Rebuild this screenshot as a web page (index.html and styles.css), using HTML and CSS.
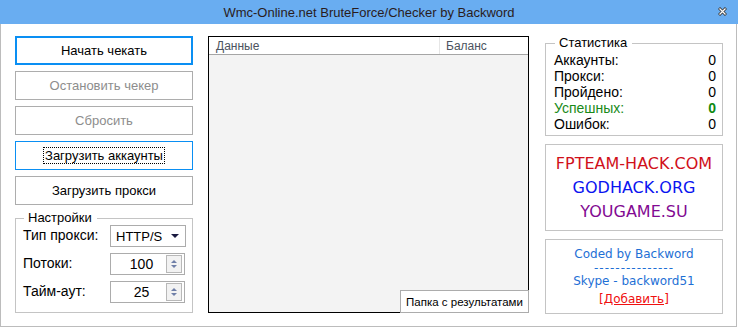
FILE: index.html
```html
<!DOCTYPE html>
<html lang="ru">
<head>
  <meta charset="UTF-8"/>
  <title>Wmc-Online.net BruteForce/Checker by Backword</title>
  <link rel="stylesheet" href="styles.css">
</head>
<body>

  <div class="window">
    <!-- TITLE BAR -->
    <div class="titlebar">
      <span class="title">Wmc-Online.net BruteForce/Checker by Backword</span>
      <span class="close">
        <svg width="9" height="9" viewBox="0 0 9 9">
          <path d="M1 1 L8 8 M8 1 L1 8" stroke="#3c3c3c" stroke-width="3"/>
          <path d="M1.5 1.5 L7.5 7.5 M7.5 1.5 L1.5 7.5" stroke="#fff" stroke-width="1.2"/>
        </svg>
      </span>
    </div>

    <div class="client">
      <!-- LEFT -->
      <div class="left">
        <button class="btn btn-default">Начать чекать</button>
        <button class="btn" disabled>Остановить чекер</button>
        <button class="btn" disabled>Сбросить</button>
        <button class="btn btn-focus"><span class="focus-ring">Загрузить аккаунты</span></button>
        <button class="btn">Загрузить прокси</button>

        <fieldset class="group settings">
          <legend>Настройки</legend>
          <div class="set-row">
            <span class="set-label">Тип прокси:</span>
            <div class="combo">
              <span>HTTP/S</span>
              <svg width="8" height="4" viewBox="0 0 8 4"><path d="M0 0 H8 L4 4 Z" fill="#1a1a40"/></svg>
            </div>
          </div>
          <div class="set-row">
            <span class="set-label">Потоки:</span>
            <div class="spin">
              <span class="spin-val">100</span>
              <span class="spin-btns">
                <span class="arrow up"></span>
                <span class="arrow down"></span>
              </span>
            </div>
          </div>
          <div class="set-row">
            <span class="set-label">Тайм-аут:</span>
            <div class="spin">
              <span class="spin-val">25</span>
              <span class="spin-btns">
                <span class="arrow up"></span>
                <span class="arrow down"></span>
              </span>
            </div>
          </div>
        </fieldset>
      </div>

      <!-- LIST -->
      <div class="list">
        <div class="list-head">
          <div class="col col-data">Данные</div>
          <div class="col col-bal">Баланс</div>
        </div>
        <div class="list-body"></div>
        <button class="folder-btn">Папка с результатами</button>
      </div>

      <!-- RIGHT -->
      <div class="right">
        <fieldset class="group stats">
          <legend>Статистика</legend>
          <div class="stat"><span>Аккаунты:</span><span>0</span></div>
          <div class="stat"><span>Прокси:</span><span>0</span></div>
          <div class="stat"><span>Пройдено:</span><span>0</span></div>
          <div class="stat good"><span>Успешных:</span><b>0</b></div>
          <div class="stat"><span>Ошибок:</span><span>0</span></div>
        </fieldset>

        <div class="box links">
          <div class="link red">FPTEAM-HACK.COM</div>
          <div class="link blue">GODHACK.ORG</div>
          <div class="link purple">YOUGAME.SU</div>
        </div>

        <div class="box credits">
          <div>Coded by Backword</div>
          <div class="dashes">---------------</div>
          <div>Skype - backword51</div>
          <a class="add" href="#">[Добавить]</a>
        </div>
      </div>
    </div>
  </div>

</body>
</html>
```

FILE: styles.css
```css
/* RESET */
* {
  margin: 0;
  padding: 0;
  box-sizing: border-box;
}

html, body {
  width: 738px;
  height: 327px;
  background: #fff;
  font-family: 'Liberation Sans', Arial, sans-serif;
  font-size: 13px;
  color: #000;
  overflow: hidden;
}

/* WINDOW */
.window {
  width: 738px;
  height: 327px;
  display: flex;
  flex-direction: column;
}

.titlebar {
  height: 24px;
  background: #69adf1;
  display: flex;
  align-items: center;
  justify-content: center;
  position: relative;
}

.title {
  font-size: 13px;
  color: #2a1c1c;
  padding-top: 1px;
}

.close {
  position: absolute;
  right: 11px;
  top: 7px;
  width: 9px;
  height: 9px;
  display: flex;
}

.client {
  width: 737px;
  flex: 1;
  border: 1px solid #bcbcbc;
  border-top: none;
  display: flex;
  align-items: flex-start;
  padding: 12px 0 0 14px;
}

/* LEFT */
.left {
  width: 178px;
  display: flex;
  flex-direction: column;
  gap: 6px;
}

.btn {
  height: 29px;
  background: #fff;
  border: 1px solid #adadad;
  font-family: inherit;
  font-size: 13px;
  color: #000;
}

.btn:disabled {
  color: #8d8d8d;
}

.btn-default {
  border: 1px solid #0a8ff3;
  box-shadow: inset 0 0 0 1px #0a8ff3;
}

.btn-focus {
  border-color: #0a8ff3;
}

.focus-ring {
  outline: 1px dotted #000;
  padding: 0 1px;
}

.group {
  border: 1px solid #c4c4c4;
  padding: 0 6px 0 7px;
}

.group legend {
  font-size: 13px;
  line-height: 14px;
  padding: 0 5px 0 4px;
  margin-left: 1px;
}

.settings {
  height: 102px;
  padding-top: 0;
  display: flex;
  flex-direction: column;
  gap: 6px;
}

.set-row {
  display: flex;
  align-items: center;
  justify-content: space-between;
  font-size: 14px;
}

.set-label {
  margin-top: -3px;
}

.combo {
  width: 76px;
  height: 22px;
  border: 1px solid #acacac;
  display: flex;
  align-items: center;
  justify-content: space-between;
  padding: 0 6px 0 5px;
  font-size: 13px;
}

.spin {
  width: 75px;
  height: 22px;
  border: 1px solid #acacac;
  display: flex;
  align-items: center;
  margin-right: 1px;
  font-size: 14px;
}

.spin-val {
  flex: 1;
  text-align: center;
  padding-left: 6px;
}

.spin-btns {
  width: 16px;
  height: 18px;
  margin-right: 2px;
  border: 1px solid #b8b8b8;
  background: #f2f2f2;
  display: flex;
  flex-direction: column;
  align-items: center;
  justify-content: center;
  gap: 2px;
}

.arrow {
  width: 0;
  height: 0;
  border-left: 3px solid transparent;
  border-right: 3px solid transparent;
}

.arrow.up {
  border-bottom: 3px solid #6f7fa8;
}

.arrow.down {
  border-top: 3px solid #6f7fa8;
}

/* LIST */
.list {
  width: 321px;
  height: 277px;
  margin-left: 15px;
  border: 1px solid #000;
  background: #f3f3f3;
  position: relative;
  display: flex;
  flex-direction: column;
}

.list-head {
  height: 18px;
  background: #fff;
  border-bottom: 1px solid #a5a5a5;
  display: flex;
  font-size: 12px;
  color: #4c5360;
}

.col {
  padding: 2px 0 0 7px;
}

.col-data {
  width: 231px;
  border-right: 1px solid #e6e6e6;
}

.col-bal {
  flex: 1;
  padding-left: 6px;
}

.list-body {
  flex: 1;
}

.folder-btn {
  position: absolute;
  right: -1px;
  bottom: -1px;
  width: 129px;
  height: 23px;
  background: #fff;
  border: 1px solid #acacac;
  font-family: inherit;
  font-size: 11.5px;
  color: #000;
}

/* RIGHT */
.right {
  width: 178px;
  margin-left: 16px;
  display: flex;
  flex-direction: column;
}

.stats {
  height: 100px;
  padding: 2px 6px 0 8px;
}

.stat {
  display: flex;
  justify-content: space-between;
  font-size: 14px;
  line-height: 16px;
}

.stat.good {
  color: #198a19;
}

.stat.good b {
  color: #118a11;
}

.box {
  border: 1px solid #c4c4c4;
  text-align: center;
}

.links {
  height: 87px;
  margin-top: 8px;
  padding-top: 7px;
}

.link {
  font-family: 'DejaVu Sans', Verdana, sans-serif;
  font-size: 16px;
  line-height: 24px;
}

.red { color: #d0101a; }
.blue { color: #0a14f0; }
.purple { color: #820a92; }

.credits {
  height: 75px;
  margin-top: 8px;
  padding-top: 8px;
  font-family: 'DejaVu Sans', Verdana, sans-serif;
  font-size: 12px;
  line-height: 13.5px;
  color: #1e6fd5;
}

.credits .dashes {
  letter-spacing: 1px;
}

.add {
  display: inline-block;
  margin-top: 4px;
  color: #f01010;
}
```
